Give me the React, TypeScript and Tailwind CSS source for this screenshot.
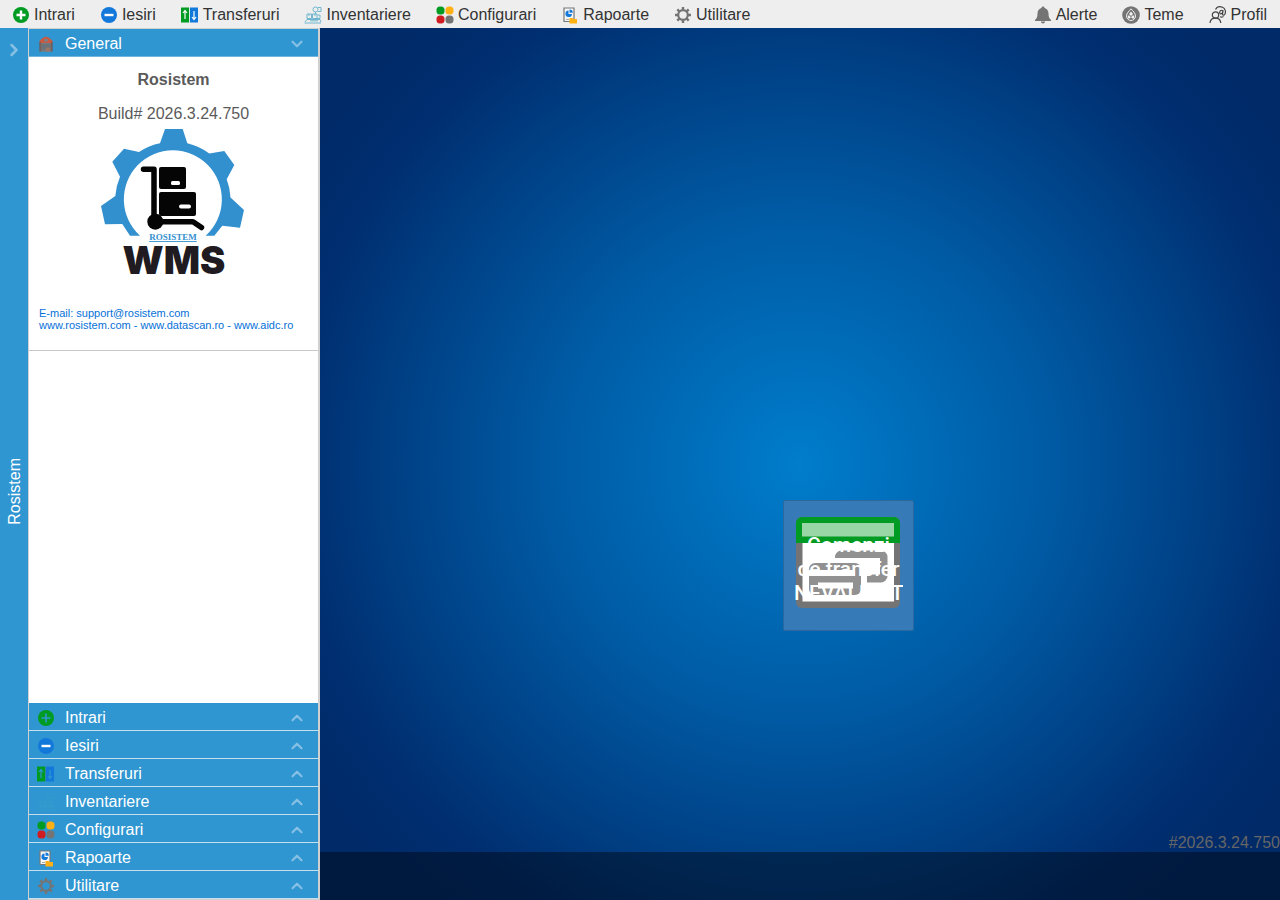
import type { ReactNode } from "react";
import { ChevronDown, ChevronRight, ChevronUp } from "lucide-react";

const PlusIcon = ({ hollow = false }: { hollow?: boolean }) => (
  <svg viewBox="0 0 18 18" className="size-[18px]">
    <circle cx="9" cy="9" r="8" fill="#009b22" />
    <path d="M9 4.5v9M4.5 9h9" stroke={hollow ? "#3096d1" : "#fff"} strokeWidth={hollow ? 1.6 : 2.4} />
  </svg>
);

const MinusIcon = () => (
  <svg viewBox="0 0 18 18" className="size-[18px]">
    <circle cx="9" cy="9" r="8" fill="#1279db" />
    <path d="M4.5 9h9" stroke="#fff" strokeWidth="2.4" />
  </svg>
);

const TransferIcon = ({ hollow = false }: { hollow?: boolean }) => {
  const arrow = hollow ? "#3096d1" : "#fff";
  return (
    <svg viewBox="0 0 18 18" className="size-[18px]">
      <path d="M0 1.5h8v15H0z" fill="#009b22" />
      <path d="M9 1.5h8v15H9z" fill="#1279db" />
      <path d="M8.5 1.5v15" stroke={hollow ? "#2f8aa0" : "#d7efdc"} />
      <path d="M4 13V5M2 7l2-2.5L6 7M13 5v8M11 11l2 2.5 2-2.5" fill="none" stroke={arrow} strokeWidth="1.2" />
    </svg>
  );
};

const InventoryIcon = ({ color = "#6fb7cf" }: { color?: string }) => (
  <svg viewBox="0 0 18 18" className="size-[18px]" fill="none" stroke={color}>
    <path d="M.5 17H17M1 16l2-2.5h13l1 2.5M3 8h4.5v4.5H3zM8.5 8H13v4.5H8.5zM13.5 9H16v3.5h-3M5 8v2M11 8v2" />
    <circle cx="11.5" cy="3.5" r="2.5" />
    <path d="M11.5 6v2M14 1.5h3v4h-3M6 14.8h8" />
  </svg>
);

const DotsIcon = () => (
  <svg viewBox="0 0 18 18" className="size-[18px]">
    <rect x=".5" y=".5" width="8" height="8" rx="3.5" fill="#009b22" />
    <rect x="9.5" y=".5" width="8" height="8" rx="3.5" fill="#ffb114" />
    <rect x=".5" y="9.5" width="8" height="8" rx="3.5" fill="#d01c20" />
    <rect x="9.5" y="9.5" width="8" height="8" rx="3.5" fill="#747474" />
  </svg>
);

const ReportIcon = () => (
  <svg viewBox="0 0 18 18" className="size-[18px]">
    <path d="M3 2h10v13.5H3z" fill="#f4f6f8" stroke="#777" strokeWidth="1.2" />
    <path d="M7.5 4.5A3.3 3.3 0 1 0 11 8H7.5z" fill="#1279db" />
    <path d="M8.5 3.5a3.3 3.3 0 0 1 3.3 3.3H8.5z" fill="#1279db" />
    <path d="M5 13.5h3" stroke="#aaa" />
    <path d="M8.5 12h3l1 1H16v4.5H8.5z" fill="#ffb114" />
  </svg>
);

const GearIcon = () => (
  <svg viewBox="0 0 18 18" className="size-[18px]" fill="none" stroke="#747474">
    <circle cx="9" cy="9" r="4.8" strokeWidth="2.2" />
    <path
      d="M9 1v3M9 14v3M1 9h3M14 9h3M3.3 3.3l2 2M12.7 12.7l2 2M3.3 14.7l2-2M12.7 5.3l2-2"
      strokeWidth="2.4"
    />
  </svg>
);

const WarehouseIcon = () => (
  <svg viewBox="0 0 18 18" className="size-[18px]">
    <path d="M3 5h12v11.5H3z" fill="#7d706e" />
    <path d="M2.5 6 5.5 3 9 1.5 12.500 3l3 3v2h-13z" fill="#c65a42" />
    <path d="M3 7v9.5M15 7v9.5" stroke="#6d5450" strokeWidth="1.2" />
    <path d="M5 8h8v8.5H5z" fill="#727d85" />
    <path d="M5 10h8M5 12h8M5 14h8" stroke="#59636b" strokeWidth=".7" />
    <path d="M7.5 4h3v2.5h-3z" fill="#6a8998" />
    <path d="M8.5 12.5H13v4H8.5z" fill="#987669" />
  </svg>
);

const BellIcon = () => (
  <svg viewBox="0 0 18 18" className="size-[18px]" fill="#747474">
    <path d="M9 .5c1 0 1.5.7 1.5 1.6 2.5.7 4 2.7 4 5.4 0 3.5.8 5 2.5 6.5v1H1v-1c1.700-1.500 2.500-3 2.500-6.500 0-2.700 1.500-4.700 4-5.400C7.500 1.200 8 .5 9 .5zM7 15.500h4c0 1.300-.8 2-2 2s-2-.7-2-2z" />
  </svg>
);

const ThemeIcon = () => (
  <svg viewBox="0 0 18 18" className="size-[18px]">
    <circle cx="9" cy="9" r="8.8" fill="#747474" />
    <path d="M9 2.8c1.5 2 4.5 4.2 4.5 7.2a4.5 4.5 0 0 1-9 0c0-3 3-5.200 4.500-7.200z" fill="none" stroke="#f0f0f0" />
    <path d="M9 5.5 11 8l-2 2-2-2zM6.800 9 9 11.200 6.800 13 5.500 11zM11.200 9 9 11.200l2.200 1.800 1.300-2z" fill="#f0f0f0" />
  </svg>
);

const ProfileIcon = () => (
  <svg viewBox="0 0 18 18" className="size-[18px]" fill="none" stroke="#444" strokeWidth="1.2">
    <circle cx="6.500" cy="9" r="3.2" />
    <path d="M1 17c.3-3 2.500-4.800 5.500-4.800s5 1.800 5.300 4.800M6.500 3.500C8 .8 11 .3 13.500 1.300c2.800 1.100 3.700 4.600 2.300 7-1 1.600-2.500.8-2.300-.8l.5-3.300" />
    <path d="M14 5.500c-.6-1.800-3-1.600-3.300.5-.3 2.300 2.300 2.400 3.100.3M11 10.800c1.200.5 2.500.2 3.500-.3" />
  </svg>
);

const Logo = () => (
  <svg viewBox="0 0 165 160" className="h-40 w-[165px]" role="img" aria-label="Rosistem WMS">
    <path
      fill="#3390cf"
      d="M10 80 24.300 70Q25 60 29 50.700L21.300 35.700 33 22.700 48 26Q58 19.500 69 17.300L74 3h17.700l4.600 14.300Q108 20 118.300 27.500L133.300 25l10 14-7.600 14.300Q139 62 139.500 71.500L153 84l-4 17.700-17.700-2-8 10h-8.600a49 49 0 1 0-65.700 0H39L31.300 98 14 98.300z"
    />
    <g fill="#050505">
      <rect x="68" y="41" width="27" height="22" rx="2" />
      <rect x="68" y="66" width="37" height="24" rx="2" />
      <circle cx="64.3" cy="95.7" r="8" />
      <path
        d="M52.500 43.300H63v48M68 95.700h34l8.500 5.800"
        fill="none"
        stroke="#050505"
        strokeWidth="5.5"
        strokeLinecap="round"
        strokeLinejoin="round"
      />
    </g>
    <rect x="80" y="55" width="9" height="4" rx="1.5" fill="#fff" />
    <rect x="88" y="78.5" width="12" height="4" rx="2" fill="#fff" />
    <text x="82" y="114" textAnchor="middle" fill="#3390cf" fontSize="9" fontWeight="700" textDecoration="underline" fontFamily="Liberation Serif, serif">
      ROSISTEM
    </text>
    <text x="83" y="148" textAnchor="middle" fill="#201b20" fontSize="38" fontWeight="900" fontFamily="Inter, sans-serif">
      WMS
    </text>
  </svg>
);

const OrderIcon = () => (
  <svg viewBox="0 0 104 92" className="h-[92px] w-[104px]">
    <rect width="104" height="91" rx="6" fill="#747474" />
    <path d="M0 26V6a6 6 0 0 1 6-6h92a6 6 0 0 1 6 6v20z" fill="#009b22" />
    <path d="M6 6h92v13.5H6z" fill="#99d7a7" />
    <path d="M6.500 26h91.500v58.500H6.500z" fill="#fff" />
    <path d="M39 40a6.500 6.500 0 0 1 6.500-6.500H85a6.500 6.500 0 0 1 6.500 6.500v19a6.500 6.500 0 0 1-6.500 6.500H71v-8h13V41H39z" fill="#919191" />
    <rect x="13" y="46" width="52" height="32" rx="6" fill="#919191" />
    <path d="M13 53h46v6H13zM22 65.500h35v6H22z" fill="#fff" />
  </svg>
);

type MenuItem = { label: string; icon: ReactNode; sideIcon?: ReactNode };

const menu: MenuItem[] = [
  { label: "Intrari", icon: <PlusIcon />, sideIcon: <PlusIcon hollow /> },
  { label: "Iesiri", icon: <MinusIcon /> },
  { label: "Transferuri", icon: <TransferIcon />, sideIcon: <TransferIcon hollow /> },
  { label: "Inventariere", icon: <InventoryIcon />, sideIcon: <InventoryIcon color="#339bcb" /> },
  { label: "Configurari", icon: <DotsIcon /> },
  { label: "Rapoarte", icon: <ReportIcon /> },
  { label: "Utilitare", icon: <GearIcon /> },
];

const userMenu: MenuItem[] = [
  { label: "Alerte", icon: <BellIcon /> },
  { label: "Teme", icon: <ThemeIcon /> },
  { label: "Profil", icon: <ProfileIcon /> },
];

function MenuBar({ items }: { items: MenuItem[] }) {
  return (
    <nav className="flex gap-px">
      {items.map((item) => (
        <button key={item.label} className="flex h-7 items-center gap-1 px-3 pt-px whitespace-nowrap">
          {item.icon}
          {item.label}
        </button>
      ))}
    </nav>
  );
}

function Sidebar() {
  return (
    <aside className="flex w-[292px] shrink-0 flex-col border border-r-2 border-[#d0d0d0] bg-white">
      <button className="flex h-7 shrink-0 items-center border-b border-[#6fb5de] bg-[#3096d1] px-2 pt-0.5 text-white">
        <WarehouseIcon />
        <span className="ml-2.5 flex-1 text-left">General</span>
        <ChevronDown size={18} strokeWidth={3} className="mr-1 text-[#85c0e4]" />
      </button>

      <div className="flex flex-col items-center border-b border-[#c8c8c8] pt-[11px] pb-[19px] text-[#5a5a5a]">
        <strong className="leading-6">Rosistem</strong>
        <span className="mt-2.5 leading-6">Build# 2026.3.24.750</span>
        <Logo />
        <div className="mt-[21px] self-start pl-2.5 text-[11px] leading-3 text-[#0670d8]">
          <a href="mailto:support@rosistem.com">E-mail: support@rosistem.com</a>
          <p>
            <a href="http://www.rosistem.com">www.rosistem.com</a> - <a href="http://www.datascan.ro">www.datascan.ro</a> -{" "}
            <a href="http://www.aidc.ro">www.aidc.ro</a>
          </p>
        </div>
      </div>

      <div className="mt-auto flex flex-col">
        {menu.map((item) => (
          <button key={item.label} className="flex h-7 items-center border-b border-[#c5dfee] bg-[#3096d1] px-2 pt-0.5 text-white">
            {item.sideIcon ?? item.icon}
            <span className="ml-2.5 flex-1 text-left">{item.label}</span>
            <ChevronUp size={18} strokeWidth={3} className="mr-1 text-[#85c0e4]" />
          </button>
        ))}
      </div>
    </aside>
  );
}

export default function App() {
  return (
    <div className="flex min-h-screen flex-col font-['Liberation_Sans',Arial,sans-serif] text-base">
      <header className="flex h-7 shrink-0 justify-between bg-[#eeeeee] pr-px text-[#333]">
        <MenuBar items={menu} />
        <MenuBar items={userMenu} />
      </header>

      <div className="flex flex-1">
        <button className="flex w-7 shrink-0 flex-col items-center bg-[#3096d1] pt-3 text-white">
          <ChevronRight size={20} strokeWidth={3} className="mb-[22px] text-[#85c0e4]" />
          <span className="flex flex-1 items-center pl-0.5">
            <span className="rotate-180 [writing-mode:vertical-rl]">Rosistem</span>
          </span>
        </button>
        <Sidebar />

        <main className="flex flex-1 flex-col bg-[radial-gradient(circle_at_50%_50%,#007dcc,#0059a2_40%,#002e70_78%,#002a68_90%)]">
          <div className="relative flex-1">
            {/* desktop shortcut */}
            <button className="absolute top-[472px] left-[463px] flex h-[131px] w-[131px] items-start rounded-xs border border-[#2b689f] bg-[#367ab7] pt-4 pl-3">
              <OrderIcon />
              <span className="absolute inset-x-2.5 top-8 overflow-hidden text-center font-[Roboto,sans-serif] text-[21px] leading-6 font-medium text-white">
                Comenzi de transfer NEVALIDATE
              </span>
            </button>
            <span className="absolute right-0 bottom-0 leading-[18px] text-[#666]">#2026.3.24.750</span>
          </div>
          <footer className="h-12 bg-black/40" />
        </main>
      </div>
    </div>
  );
}
